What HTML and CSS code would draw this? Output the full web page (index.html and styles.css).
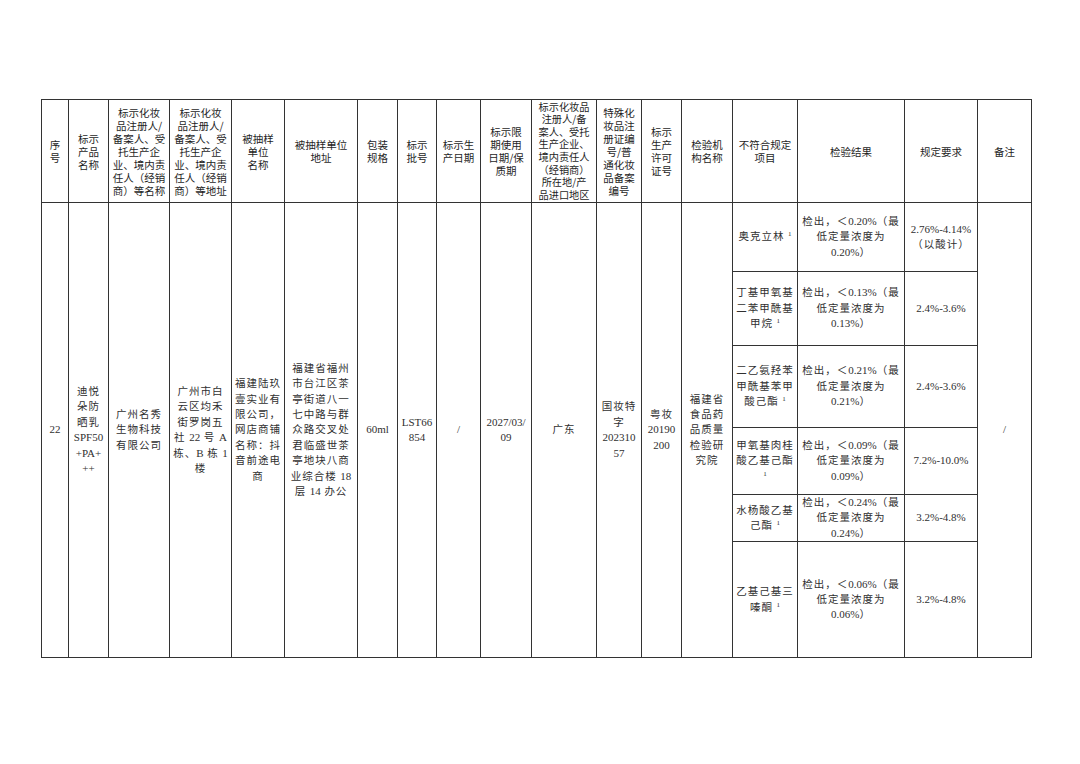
FILE: index.html
```html
<!DOCTYPE html>
<html lang="zh-CN">
<head>
<meta charset="utf-8">
<title>不合格化妆品信息</title>
<link rel="stylesheet" href="styles.css">
</head>
<body>
<div class="page">
<table class="report">
<colgroup>
<col class="c1"><col class="c2"><col class="c3"><col class="c4"><col class="c5"><col class="c6"><col class="c7"><col class="c8"><col class="c9"><col class="c10"><col class="c11"><col class="c12"><col class="c13"><col class="c14"><col class="c15"><col class="c16"><col class="c17"><col class="c18">
</colgroup>
<thead>
<tr class="hd">
<th>序<br>号</th>
<th>标示<br>产品<br>名称</th>
<th>标示化妆<br>品注册人/<br>备案人、受<br>托生产企<br>业、境内责<br>任人（经销<br>商）等名称</th>
<th>标示化妆<br>品注册人/<br>备案人、受<br>托生产企<br>业、境内责<br>任人（经销<br>商）等地址</th>
<th>被抽样<br>单位<br>名称</th>
<th>被抽样单位<br>地址</th>
<th>包装<br>规格</th>
<th>标示<br>批号</th>
<th>标示生<br>产日期</th>
<th>标示限<br>期使用<br>日期/保<br>质期</th>
<th class="tight">标示化妆品<br>注册人/备<br>案人、受托<br>生产企业、<br>境内责任人<br>（经销商）<br>所在地/产<br>品进口地区</th>
<th>特殊化<br>妆品注<br>册证编<br>号/普<br>通化妆<br>品备案<br>编号</th>
<th>标示<br>生产<br>许可<br>证号</th>
<th>检验机<br>构名称</th>
<th>不符合规定<br>项目</th>
<th>检验结果</th>
<th>规定要求</th>
<th>备注</th>
</tr>
</thead>
<tbody>
<tr class="s1">
<td rowspan="6" class="num">22</td>
<td rowspan="6">迪悦<br>朵防<br>晒乳<br><span class="m">SPF50<br>+PA+<br>++</span></td>
<td rowspan="6">广州名秀<br>生物科技<br>有限公司</td>
<td rowspan="6">广州市白<br>云区均禾<br>街罗岗五<br>社 <span class="m">22</span> 号 <span class="m">A</span><br>栋、<span class="m">B</span> 栋 <span class="m">1</span><br>楼</td>
<td rowspan="6">福建陆玖<br>壹实业有<br>限公司，<br>网店商铺<br>名称：抖<br>音前途电<br>商</td>
<td rowspan="6">福建省福州<br>市台江区茶<br>亭街道八一<br>七中路与群<br>众路交叉处<br>君临盛世茶<br>亭地块八商<br>业综合楼 <span class="m">18</span><br>层 <span class="m">14</span> 办公</td>
<td rowspan="6" class="num">60ml</td>
<td rowspan="6" class="num">LST66<br>854</td>
<td rowspan="6" class="num">/</td>
<td rowspan="6" class="num">2027/03/<br>09</td>
<td rowspan="6">广东</td>
<td rowspan="6">国妆特<br>字<br><span class="m">202310<br>57</span></td>
<td rowspan="6">粤妆<br><span class="m">20190<br>200</span></td>
<td rowspan="6">福建省<br>食品药<br>品质量<br>检验研<br>究院</td>
<td>奥克立林 <sup class="n">1</sup></td>
<td>检出，＜<span class="m">0.20%</span>（最<br>低定量浓度为<br><span class="m">0.20%</span>）</td>
<td><span class="m">2.76%-4.14%</span><br>（以酸计）</td>
<td rowspan="6" class="num">/</td>
</tr>
<tr class="s2">
<td>丁基甲氧基<br>二苯甲酰基<br>甲烷 <sup class="n">1</sup></td>
<td>检出，＜<span class="m">0.13%</span>（最<br>低定量浓度为<br><span class="m">0.13%</span>）</td>
<td class="num">2.4%-3.6%</td>
</tr>
<tr class="s3">
<td>二乙氨羟苯<br>甲酰基苯甲<br>酸己酯 <sup class="n">1</sup></td>
<td>检出，＜<span class="m">0.21%</span>（最<br>低定量浓度为<br><span class="m">0.21%</span>）</td>
<td class="num">2.4%-3.6%</td>
</tr>
<tr class="s4">
<td>甲氧基肉桂<br>酸乙基己酯<br><sup class="n">1</sup></td>
<td>检出，＜<span class="m">0.09%</span>（最<br>低定量浓度为<br><span class="m">0.09%</span>）</td>
<td class="num">7.2%-10.0%</td>
</tr>
<tr class="s5">
<td>水杨酸乙基<br>己酯 <sup class="n">1</sup></td>
<td>检出，＜<span class="m">0.24%</span>（最<br>低定量浓度为<br><span class="m">0.24%</span>）</td>
<td class="num">3.2%-4.8%</td>
</tr>
<tr class="s6">
<td>乙基己基三<br>嗪酮 <sup class="n">1</sup></td>
<td>检出，＜<span class="m">0.06%</span>（最<br>低定量浓度为<br><span class="m">0.06%</span>）</td>
<td class="num">3.2%-4.8%</td>
</tr>
</tbody>
</table>
</div>
</body>
</html>
```

FILE: styles.css
```css
html, body {
  margin: 0;
  padding: 0;
  background: #ffffff;
}

.page {
  padding: 99px 0 0 41px;
}

.report {
  border-collapse: collapse;
  table-layout: fixed;
  width: 990px;
}

.c1 { width: 27px; }
.c2 { width: 40px; }
.c3 { width: 61px; }
.c4 { width: 62px; }
.c5 { width: 53px; }
.c6 { width: 73px; }
.c7 { width: 40px; }
.c8 { width: 39px; }
.c9 { width: 44px; }
.c10 { width: 51px; }
.c11 { width: 65px; }
.c12 { width: 45px; }
.c13 { width: 40px; }
.c14 { width: 51px; }
.c15 { width: 65px; }
.c16 { width: 107px; }
.c17 { width: 73px; }
.c18 { width: 54px; }

.report th,
.report td {
  border: 1px solid #333333;
  padding: 0;
  text-align: center;
  vertical-align: middle;
  white-space: nowrap;
  overflow: visible;
}

.report th {
  font-family: "Noto Sans CJK SC", "Noto Sans", sans-serif;
  font-size: 10.5px;
  line-height: 13px;
  font-weight: normal;
  color: #1e1e1e;
}

.report th.tight {
  font-size: 10.2px;
  line-height: 12.6px;
}

.report td {
  font-family: "Liberation Serif", "Noto Sans CJK SC", serif;
  font-size: 10.5px;
  letter-spacing: 1px;
  line-height: 15.4px;
  color: #303030;
}

.report td.num,
.m {
  font-size: 11px;
  letter-spacing: 0;
}

.n {
  font-size: 7px;
  line-height: 0;
  vertical-align: 4px;
  letter-spacing: 0;
}

.hd { height: 103px; }
.s1 { height: 69px; }
.s2 { height: 74px; }
.s3 { height: 82px; }
.s4 { height: 67px; }
.s5 { height: 47px; }
.s6 { height: 116px; }
```
